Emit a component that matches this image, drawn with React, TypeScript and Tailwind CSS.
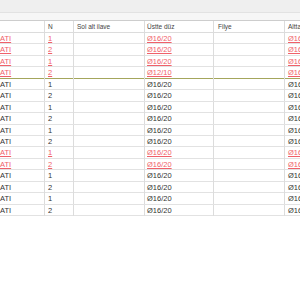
import React from 'react';

type Row = { n: string; ust: string; red?: boolean; mark?: boolean };

const rows: Row[] = [
  { n: '1', ust: 'Ø16/20', red: true },
  { n: '2', ust: 'Ø16/20', red: true },
  { n: '1', ust: 'Ø16/20', red: true },
  { n: '2', ust: 'Ø12/10', red: true, mark: true },
  { n: '1', ust: 'Ø16/20' },
  { n: '2', ust: 'Ø16/20' },
  { n: '1', ust: 'Ø16/20' },
  { n: '2', ust: 'Ø16/20' },
  { n: '1', ust: 'Ø16/20' },
  { n: '2', ust: 'Ø16/20' },
  { n: '1', ust: 'Ø16/20', red: true },
  { n: '2', ust: 'Ø16/20', red: true },
  { n: '1', ust: 'Ø16/20' },
  { n: '2', ust: 'Ø16/20' },
  { n: '1', ust: 'Ø16/20' },
  { n: '2', ust: 'Ø16/20' },
];

const cols = 'grid grid-cols-[53px_29px_71px_69px_71px_70px]';

export default function App() {
  return (
    <div className="w-[300px] h-[300px] overflow-hidden bg-white font-['Liberation_Sans',Arial,sans-serif]">
      <div className="h-[13px] bg-[#efefef] border-b border-[#e2e2e2]" />
      <div className="h-[8px] bg-[#f6f6f6] border-b border-[#cdcdcd]" />
      <div className="-ml-[8px] w-[370px]">
        <div className={`${cols} h-[12px] border-b border-[#dcdcdc] text-[6.5px] text-[#444]`}>
          <div className="border-r border-[#dcdcdc]" />
          <div className="border-r border-[#dcdcdc] pl-[3px] flex items-center">N</div>
          <div className="border-r border-[#dcdcdc] pl-[3px] flex items-center">Sol alt ilave</div>
          <div className="border-r border-[#dcdcdc] pl-[2px] flex items-center">Üstte düz</div>
          <div className="border-r border-[#dcdcdc] pl-[4px] flex items-center">Filye</div>
          <div className="border-r border-[#dcdcdc] pl-[3px] flex items-center">Altta düz</div>
        </div>
        {rows.map((r, i) => {
          const txt = r.red ? 'text-[#f0606a] underline decoration-[#f0606a]' : 'text-[#333]';
          const line = r.mark ? 'border-[#a4a65c]' : 'border-[#e2e2e2]';
          return (
            <div key={i} className={`${cols} h-[11.45px] border-b ${line} text-[7.5px] ${txt}`}>
              <div className="border-r border-[#dcdcdc] pl-[3px] flex items-center">KATI</div>
              <div className="border-r border-[#dcdcdc] pl-[3px] flex items-center">{r.n}</div>
              <div className="border-r border-[#dcdcdc]" />
              <div className="border-r border-[#dcdcdc] pl-[2px] flex items-center">{r.ust}</div>
              <div className="border-r border-[#dcdcdc]" />
              <div className="border-r border-[#dcdcdc] pl-[3px] flex items-center">Ø16/20</div>
            </div>
          );
        })}
      </div>
    </div>
  );
}
